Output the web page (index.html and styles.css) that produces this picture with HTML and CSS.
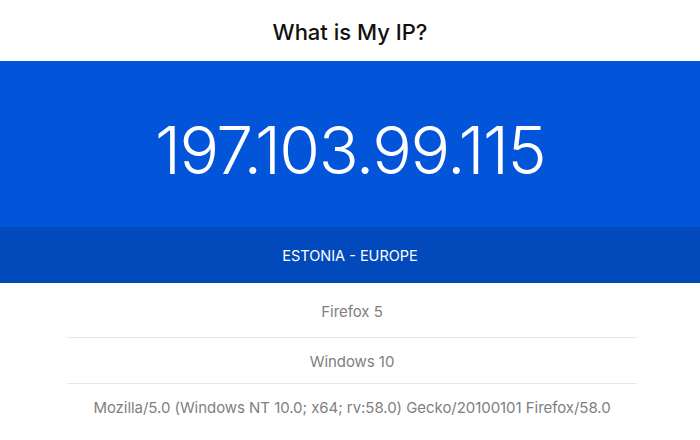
FILE: index.html
```html
<!DOCTYPE html>
<html>
<head>
<meta charset="utf-8">
<link rel="stylesheet" href="styles.css">
</head>
<body>
<header class="top"><h1 class="title">What is My IP?</h1></header>
<section class="hero"><div class="ip">197.103.99.115</div></section>
<div class="region">ESTONIA - EUROPE</div>
<ul class="details">
  <li class="row first">Firefox 5</li>
  <li class="row">Windows 10</li>
  <li class="row">Mozilla/5.0 (Windows NT 10.0; x64; rv:58.0) Gecko/20100101 Firefox/58.0</li>
</ul>
</body>
</html>
```
FILE: styles.css
```css
html, body { margin: 0; padding: 0; background: #fff; }
body { font-family: "Inter", "Noto Sans", sans-serif; width: 700px; }
.top { height: 61px; display: flex; align-items: center; justify-content: center; }
.title { margin: 0; font-size: 22px; font-weight: 500; color: #111; letter-spacing: 0; padding-top: 2px; }
.hero { height: 166px; background: #0255d8; display: flex; align-items: center; justify-content: center; }
.ip { color: #fff; font-size: 66px; font-weight: 300; letter-spacing: -1.5px; padding-top: 12px; }
.region { height: 56px; background: #024abb; color: #fff; font-size: 14.5px; display: flex; align-items: center; justify-content: center; letter-spacing: 0; }
.details { list-style: none; margin: 0 63px 0 67px; padding: 0; }
.row { display: flex; align-items: center; justify-content: center; height: 46px; color: #808080; font-size: 15px; border-top: 1px solid #e8e8e8; letter-spacing: -0.05px; padding-top: 1px; box-sizing: border-box; }
.row.first { border-top: none; height: 54px; padding-top: 3px; }
```
